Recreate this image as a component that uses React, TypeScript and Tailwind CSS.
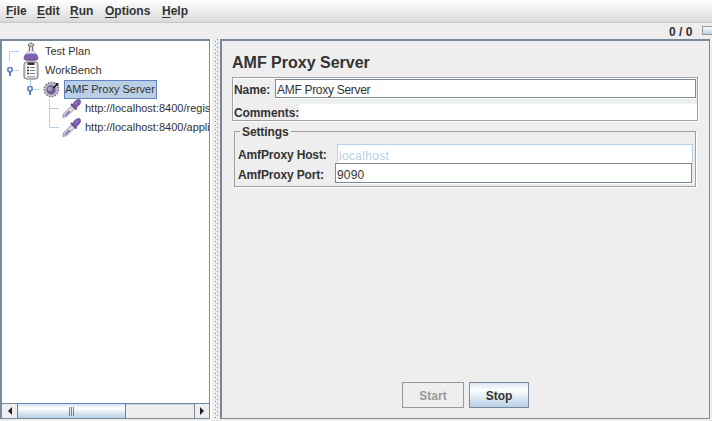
import type { ReactNode } from "react";

const MENUS = [
  { label: "File", cls: "w-[31px]" },
  { label: "Edit", cls: "w-[33px]" },
  { label: "Run", cls: "w-[35px]" },
  { label: "Options", cls: "w-[57px]" },
  { label: "Help", cls: "w-[30px]" },
];

function MenuBar() {
  return (
    <nav className="flex h-[23px] shrink-0 border-b border-[#c8c8c8] bg-linear-to-b from-white to-[#dadada] pl-[6px] text-[12px] leading-[22px] font-bold">
      {MENUS.map((m) => (
        <span key={m.label} className={m.cls}>
          <span className="underline underline-offset-2">{m.label[0]}</span>
          {m.label.slice(1)}
        </span>
      ))}
    </nav>
  );
}

function Flask() {
  return (
    <svg width="16" height="19" viewBox="0 0 16 19" className="shrink-0">
      <path d="M6 4V8L1.500 14Q0 18 3 18H13Q16 18 14.500 14L10 8V4Z" fill="#e4e1e8" stroke="#b3b0b8" strokeWidth=".8" />
      <path d="M2.500 12Q8 10.800 13.500 12L15 14.500Q16 18.300 13 18.300H3Q0 18.300 1 14.500Z" fill="#7f62b3" />
      <path d="M3 18H13" stroke="#5f4985" />
      <path d="M6.500 4.500V9M9.500 4.500V9" stroke="#77737f" />
      <ellipse cx="8" cy="3" rx="3" ry="1.300" fill="#eee" stroke="#66636b" />
      <path d="M6 1.200L9 .5" stroke="#bbb" />
    </svg>
  );
}

function Clipboard() {
  return (
    <svg width="16" height="19" viewBox="0 0 16 19" className="shrink-0">
      <rect x="1" y="1" width="14" height="17" rx="2.500" fill="#dcdade" stroke="#77737f" />
      <rect x="3" y="4" width="10" height="12" fill="#fff" />
      <rect x="4.500" y="1.500" width="7" height="2.500" rx="1" fill="#333" />
      <path d="M4 6.500H6M4 9.500H6M4 12.500H6" stroke="#333" strokeWidth="1.500" />
      <path d="M7 6.500H12M7 9.500H12M7 12.500H12" stroke="#777" />
      <path d="M4 15.500H12" stroke="#aaa" />
    </svg>
  );
}

function Gauge() {
  return (
    <svg width="17" height="19" viewBox="0 0 17 19" className="shrink-0">
      <circle cx="8.300" cy="9.500" r="7.200" fill="#c5c0ce" stroke="#6f6a78" strokeDasharray="1.700 1.300" strokeWidth="1.300" />
      <circle cx="8.300" cy="9.500" r="5.500" fill="#aaa2b9" />
      <circle cx="8" cy="9.800" r="4.400" fill="#6f5e91" />
      <circle cx="7" cy="9" r="2.300" fill="#a99cc2" />
      <path d="M10.500 8L15 3.500" fill="none" stroke="#111" strokeWidth="1.500" />
      <path d="M12.500 3.500H15V6" fill="none" stroke="#222" />
    </svg>
  );
}

function Dropper() {
  return (
    <svg width="19" height="19" viewBox="0 0 19 19" className="shrink-0">
      <path d="M.8 18.500L1.500 14.800L10 6.500L13 9.500L4.800 17.500Z" fill="#dddae5" stroke="#8f8a99" strokeWidth=".9" />
      <path d="M2 16.800L6.500 12L8.500 12.500L4.500 16.500Z" fill="#8268b6" />
      <path d="M9 5L14.500 10.500" stroke="#5f497f" strokeWidth="2" />
      <path d="M10 6L13 2.300Q15.500 -.5 18 .8Q19.500 3.500 17.200 6L13.500 9.500Z" fill="#7b5cae" stroke="#65498f" strokeWidth=".7" />
      <path d="M13 5L16 2.500" stroke="#a78bd0" />
    </svg>
  );
}

function Handle({ joined = false }: { joined?: boolean }) {
  return (
    <svg width="21" height="19" viewBox="0 0 21 19" className="shrink-0">
      <path d={joined ? "M8.500 0V6M12 9.500H17" : "M12 9.500H17"} stroke="#b8cfe5" />
      <path d="M8 11V15" stroke="#6382bf" strokeWidth="2" />
      <circle cx="8" cy="8.700" r="2.200" fill="#fff" stroke="#6382bf" strokeWidth="1.700" />
    </svg>
  );
}

function TreeRow({ indent, lead, icon, children }: { indent: string; lead: ReactNode; icon: ReactNode; children: ReactNode }) {
  return (
    <div className={`flex h-[19px] items-center whitespace-nowrap ${indent}`}>
      {lead}
      {icon}
      {children}
    </div>
  );
}

function Branch({ kind }: { kind: "top" | "mid" | "end" }) {
  const d = kind === "top" ? "M7.500 19V9.500H17" : kind === "mid" ? "M8.500 0V19M8.500 9.500H18" : "M8.500 0V9.500H18";
  return (
    <svg width="21" height="19" viewBox="0 0 21 19" className="shrink-0">
      <path d={d} fill="none" stroke="#b8cfe5" />
    </svg>
  );
}

function TreePanel() {
  return (
    <section className="flex w-[210px] shrink-0 flex-col border-2 border-r-1 border-b-1 border-[#7a8a99] bg-white">
      <div className="flex-1 overflow-hidden pt-px text-[11px]">
        <TreeRow indent="pl-0" lead={<Branch kind="top" />} icon={<Flask />}>
          <span className="pl-[6px]">Test Plan</span>
        </TreeRow>
        <TreeRow indent="pl-0" lead={<Handle />} icon={<Clipboard />}>
          <span className="pl-[6px]">WorkBench</span>
        </TreeRow>
        <TreeRow indent="pl-[20px]" lead={<Handle joined />} icon={<Gauge />}>
          <span className="ml-[4px] h-[19px] w-[93px] border border-[#6382bf] bg-[#b8cfe5] leading-[17px]">AMF Proxy Server</span>
        </TreeRow>
        <TreeRow indent="pl-[39px]" lead={<Branch kind="mid" />} icon={<Dropper />}>
          <span className="pl-[4px]">http://localhost:8400/regis</span>
        </TreeRow>
        <TreeRow indent="pl-[39px]" lead={<Branch kind="end" />} icon={<Dropper />}>
          <span className="pl-[4px]">http://localhost:8400/appli</span>
        </TreeRow>
      </div>
      <div className="flex h-[15px] bg-[#eee]">
        <div className="flex w-[15px] items-center justify-center border-t border-[#7a8a99]">
          <svg width="4" height="8" viewBox="0 0 4 8"><path d="M4 0V8L0 4Z" fill="#222" /></svg>
        </div>
        <div className="flex w-[109px] items-center justify-center gap-px border border-b-0 border-[#6382bf] bg-linear-to-b from-[#d5e3f0] via-white via-30% to-[#b8cfe5]">
          <i className="h-[9px] w-px bg-[#6382bf]" />
          <i className="h-[9px] w-px bg-[#6382bf]" />
          <i className="h-[9px] w-px bg-[#6382bf]" />
        </div>
        <div className="flex-1 border-t border-r border-[#7a8a99] shadow-[inset_0_1px_#b8cfe5]" />
        <div className="flex w-[14px] items-center justify-center border-t border-[#7a8a99]">
          <svg width="4" height="8" viewBox="0 0 4 8"><path d="M0 0V8L4 4Z" fill="#222" /></svg>
        </div>
      </div>
    </section>
  );
}

function Divider() {
  return (
    <div className="flex w-[10px] shrink-0 border-l-2 border-white pl-[3px]">
      <svg width="4" height="380" shapeRendering="crispEdges">
        <defs>
          <pattern id="grip" width="4" height="4" patternUnits="userSpaceOnUse">
            <rect width="1" height="1" x="0" y="2" fill="#7a8a99" />
            <rect width="1" height="1" x="2" y="0" fill="#7a8a99" />
          </pattern>
        </defs>
        <rect width="4" height="380" fill="url(#grip)" />
      </svg>
    </div>
  );
}

function ConfigPanel() {
  return (
    <section className="flex w-[490px] shrink-0 flex-col border-2 border-r-1 border-b-1 border-[#7a8a99] pl-[10px] text-[12px] font-bold">
      <h1 className="mt-[10px] h-[26px] text-[16px] leading-[23px]">AMF Proxy Server</h1>
      <div className="h-[44px] w-[466px] border border-[#a0a0a0] pl-px shadow-[1px_1px_white,inset_1px_1px_white]">
        <div className="flex h-[22px] items-start pt-px">
          <label className="w-[41px] leading-[22px] tracking-[-0.1px]">Name:</label>
          <div className="h-[19px] w-[421px] border border-[#7a8a99] bg-white pl-px leading-[20px] font-normal tracking-[-0.3px] shadow-[0_1px_white]">AMF Proxy Server</div>
        </div>
        <div className="mt-[4px] flex h-[16px] leading-[18px]">
          <label className="w-[65px] tracking-[-0.1px]">Comments:</label>
          <div className="flex-1 bg-white" />
        </div>
      </div>
      <fieldset className="mt-[3px] ml-[2px] h-[63px] w-[462px] border border-[#a0a0a0] pl-[3px] shadow-[1px_1px_white]">
        <legend className="ml-[2px] h-[15px] px-[2px] leading-[16px] tracking-[-0.1px]">Settings</legend>
        <div className="mt-[5px] flex h-[20px] items-start">
          <label className="w-[99px] leading-[22px] tracking-[-0.15px]">AmfProxy Host:</label>
          <div className="h-[20px] w-[356px] border border-[#b8cfe5] bg-white pl-px leading-[22px] font-normal tracking-[0.3px] text-[#b8cfe5]">localhost</div>
        </div>
        <div className="-mt-px flex h-[20px] items-start">
          <label className="w-[97px] leading-[25px] tracking-[-0.15px]">AmfProxy Port:</label>
          <div className="h-[20px] w-[357px] border border-[#7a8a99] bg-white pl-px leading-[22px] font-normal tracking-[0.2px] shadow-[0_1px_white]">9090</div>
        </div>
      </fieldset>
      <div className="mt-auto mb-[10px] ml-[170px] flex gap-[5px]">
        <button className="h-[26px] w-[62px] border border-[#999] pt-px text-[#999]">Start</button>
        <button className="h-[26px] w-[60px] border border-[#7a8a99] bg-linear-to-b from-[#dde8f3] via-white via-30% to-[#b8cfe5] pt-px">Stop</button>
      </div>
    </section>
  );
}

export default function App() {
  return (
    <div className="flex h-[421px] w-[712px] flex-col overflow-hidden bg-[#eee] font-['Liberation_Sans',Arial,sans-serif] text-[#333]">
      <MenuBar />
      <div className="flex h-[16px] shrink-0 justify-end text-[12px] leading-[18px] font-bold">
        <span className="w-[33px]">0 / 0</span>
        <span className="mt-[3px] h-[9px] w-[10px] border border-r-0 border-[#999] bg-linear-to-b from-white to-[#b8cfe5]" />
      </div>
      <main className="flex h-[380px]">
        <TreePanel />
        <Divider />
        <ConfigPanel />
      </main>
    </div>
  );
}
